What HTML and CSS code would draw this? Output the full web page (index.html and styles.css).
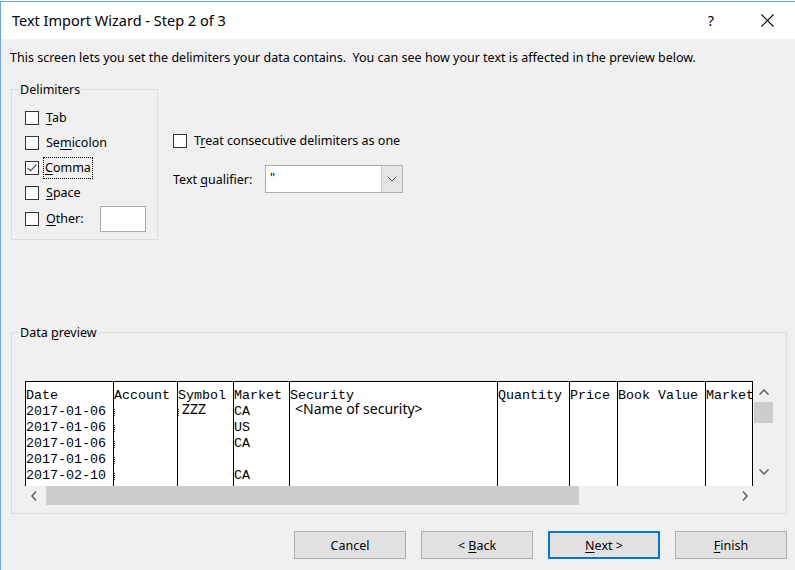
FILE: index.html
```html
<!DOCTYPE html>
<html>
<head>
<meta charset="utf-8">
<link rel="stylesheet" href="styles.css">
</head>
<body>
<div class="topstrip"></div>
<div class="window">
  <div class="titlebar">
    <div class="title">Text Import Wizard - Step 2 of 3</div>
    <div class="help">?</div>
    <div class="close"><svg width="13" height="13" viewBox="0 0 13 13"><path d="M0.5 0.5 L12.5 12.5 M12.5 0.5 L0.5 12.5" stroke="#000" stroke-width="1.1" fill="none"/></svg></div>
  </div>
  <div class="content">
    <p class="desc">This screen lets you set the delimiters your data contains.&nbsp; You can see how your text is affected in the preview below.</p>
    <div class="upper">
      <div class="group delims">
        <span class="glabel">Delimiters</span>
        <div class="cb-row"><span class="cb"></span><span class="cb-text"><u>T</u>ab</span></div>
        <div class="cb-row"><span class="cb"></span><span class="cb-text">Se<u>m</u>icolon</span></div>
        <div class="cb-row"><span class="cb"><svg width="12" height="12" viewBox="0 0 12 12"><path d="M1.5 6 L4.5 9 L10.5 2.5" stroke="#555" stroke-width="1.2" fill="none"/></svg></span><span class="cb-text focus"><u>C</u>omma</span></div>
        <div class="cb-row"><span class="cb"></span><span class="cb-text"><u>S</u>pace</span></div>
        <div class="cb-row other"><span class="cb"></span><span class="cb-text"><u>O</u>ther:</span><span class="textbox"></span></div>
      </div>
      <div class="options">
        <div class="cb-row treat"><span class="cb"></span><span class="cb-text">T<u>r</u>eat consecutive delimiters as one</span></div>
        <div class="qual-row">
          <span class="qual-label">Text <u>q</u>ualifier:</span>
          <div class="combo">
            <span class="combo-val">"</span>
            <span class="combo-btn"><svg width="10" height="6" viewBox="0 0 10 6"><path d="M0.5 0.5 L5 5 L9.5 0.5" stroke="#555" stroke-width="1" fill="none"/></svg></span>
          </div>
        </div>
      </div>
    </div>
    <div class="group preview">
      <span class="glabel">Data <u>p</u>review</span>
      <div class="pv">
        <div class="pv-main">
          <div class="grid">
            <div class="col w-date">
              <div>Date</div><div>2017-01-06</div><div>2017-01-06</div><div>2017-01-06</div><div>2017-01-06</div><div>2017-02-10</div>
            </div>
            <div class="col w-acct">
              <div>Account</div><div><span class="frag"></span></div><div><span class="frag"></span></div><div><span class="frag"></span></div><div><span class="frag"></span></div><div><span class="frag"></span></div>
            </div>
            <div class="col w-sym">
              <div>Symbol</div><div><span class="frag"></span><span class="prop zzz">ZZZ</span></div>
            </div>
            <div class="col w-mkt">
              <div>Market</div><div>CA</div><div>US</div><div>CA</div><div>&nbsp;</div><div>CA</div>
            </div>
            <div class="col w-sec">
              <div>Security</div><div><span class="prop secname">&lt;Name of security&gt;</span></div>
            </div>
            <div class="col w-qty"><div>Quantity</div></div>
            <div class="col w-price"><div>Price</div></div>
            <div class="col w-book"><div>Book Value</div></div>
            <div class="col w-mkt2"><div>Market</div></div>
          </div>
          <div class="hscroll">
            <span class="arrow"><svg width="6" height="10" viewBox="0 0 6 10"><path d="M5 0.5 L1 5 L5 9.5" stroke="#606060" stroke-width="1.5" fill="none"/></svg></span>
            <div class="htrack"><div class="hthumb"></div></div>
            <span class="arrow"><svg width="6" height="10" viewBox="0 0 6 10"><path d="M1 0.5 L5 5 L1 9.5" stroke="#606060" stroke-width="1.5" fill="none"/></svg></span>
          </div>
        </div>
        <div class="vscroll">
          <span class="varrow"><svg width="10" height="6" viewBox="0 0 10 6"><path d="M0.5 5.5 L5 1 L9.5 5.5" stroke="#606060" stroke-width="1.5" fill="none"/></svg></span>
          <div class="vthumb"></div>
          <div class="vtrack"></div>
          <span class="varrow"><svg width="10" height="6" viewBox="0 0 10 6"><path d="M0.5 0.5 L5 5 L9.5 0.5" stroke="#606060" stroke-width="1.5" fill="none"/></svg></span>
        </div>
      </div>
    </div>
    <div class="buttons">
      <div class="btn"><span>Cancel</span></div>
      <div class="btn"><span>&lt; <u>B</u>ack</span></div>
      <div class="btn default"><span><u>N</u>ext &gt;</span></div>
      <div class="btn"><span><u>F</u>inish</span></div>
    </div>
  </div>
</div>
</body>
</html>
```

FILE: styles.css
```css
* { box-sizing: border-box; }
html, body { margin: 0; padding: 0; }
body {
  width: 795px;
  height: 570px;
  overflow: hidden;
  background: #ffffff;
  font-family: "Noto Sans", "DejaVu Sans", sans-serif;
  font-size: 12.5px;
  color: #000;
}
u { text-decoration: underline; text-underline-offset: 2px; }
.topstrip { height: 1px; background: #fff; }
.window {
  border-top: 1px solid #6ea2da;
  border-left: 1px solid #6ea2da;
  height: 569px;
  background: #f0f0f0;
}
.titlebar {
  height: 37px;
  background: #fff;
  display: flex;
  align-items: center;
}
.title {
  margin-left: 11px;
  font-size: 14.5px;
  flex: 1;
  margin-top: -2px;
}
.help {
  font-size: 14.5px;
  width: 20px;
  margin-right: 40px;
  text-align: center;
  margin-top: -2px;
}
.close {
  width: 13px;
  height: 13px;
  margin-right: 21px;
  display: flex;
}
.content { padding-top: 11px; }
.desc {
  margin: 0 0 0 9px;
  line-height: 16px;
  height: 16px;
  white-space: nowrap;
}
.upper {
  display: flex;
  margin-top: 23px;
  margin-left: 10px;
}
.group {
  border: 1px solid #dcdcdc;
  position: relative;
}
.glabel {
  position: absolute;
  top: -8px;
  left: 7px;
  line-height: 16px;
  background: #f0f0f0;
  padding: 0 1px;
}
.delims {
  width: 147px;
  height: 151px;
  padding: 15px 0 0 13px;
}
.cb-row {
  display: flex;
  align-items: center;
  height: 25px;
}
.cb {
  width: 14px;
  height: 14px;
  border: 1px solid #333;
  background: #fff;
  flex: none;
  display: flex;
  align-items: center;
  justify-content: center;
}
.cb-text {
  margin-left: 7px;
  line-height: 16px;
  white-space: nowrap;
}
.focus {
  outline: 1px dotted #000;
  outline-offset: 0px;
  padding: 2px 1px;
  margin-left: 5px;
}
.other { height: 27px; }
.textbox {
  width: 46px;
  height: 26px;
  background: #fff;
  border: 1px solid #ababab;
  margin-left: 16px;
}
.options {
  margin-left: 15px;
}
.treat { margin-top: 39px; }
.qual-row {
  display: flex;
  align-items: center;
  margin-top: 12px;
  height: 28px;
}
.qual-label { width: 92px; white-space: nowrap; }
.combo {
  width: 138px;
  height: 28px;
  border: 1px solid #adadad;
  background: #fff;
  display: flex;
}
.combo-val {
  flex: 1;
  padding-left: 4px;
  line-height: 24px;
}
.combo-btn {
  width: 21px;
  background: #e5e5e5;
  border-left: 1px solid #cccccc;
  display: flex;
  align-items: center;
  justify-content: center;
}
.preview {
  margin-top: 92px;
  margin-left: 10px;
  width: 776px;
  height: 182px;
}
.pv {
  display: flex;
  margin-top: 48px;
  margin-left: 13px;
  width: 748px;
  height: 124px;
}
.pv-main { width: 728px; }
.grid {
  display: flex;
  height: 105px;
  background: #fff;
  border-top: 1px solid #000;
  border-left: 1px solid #000;
  overflow: hidden;
  font-family: "Liberation Mono", monospace;
  font-size: 13.33px;
}
.col {
  border-right: 1px solid #000;
  padding-top: 6px;
  white-space: nowrap;
  overflow: hidden;
  flex: none;
}
.col > div { height: 16px; line-height: 16px; }
.w-date { width: 88px; }
.w-acct { width: 64px; }
.w-sym { width: 56px; }
.w-mkt { width: 56px; }
.w-sec { width: 208px; }
.w-qty { width: 72px; }
.w-price { width: 48px; }
.w-book { width: 88px; }
.w-mkt2 { width: 47px; }
.frag {
  display: inline-block;
  width: 1px;
  height: 7px;
  margin-top: 5px;
  border-left: 1px dotted #333;
  vertical-align: top;
}
.prop {
  font-family: "Noto Sans", sans-serif;
  font-size: 14px;
  vertical-align: top;
  line-height: 13px;
  display: inline-block;
  margin-top: -2px;
}
.zzz { margin-left: 3px; }
.secname { margin-left: 5px; }
.hscroll {
  height: 19px;
  display: flex;
  align-items: center;
  background: #f0f0f0;
}
.arrow {
  width: 17px;
  display: flex;
  justify-content: center;
  flex: none;
}
.htrack { flex: 1; height: 19px; padding-left: 4px; }
.hthumb { width: 533px; height: 19px; background: #cdcdcd; }
.vscroll {
  width: 20px;
  display: flex;
  flex-direction: column;
  align-items: stretch;
  padding-top: 8px;
}
.varrow { display: flex; justify-content: center; height: 8px; padding-left: 1px; }
.vthumb { height: 21px; margin-top: 5px; background: #cdcdcd; margin-left: 1px; }
.vtrack { height: 46px; }
.buttons {
  display: flex;
  justify-content: flex-end;
  gap: 15px;
  margin-top: 17px;
  padding-right: 8px;
}
.btn {
  width: 112px;
  height: 28px;
  background: #e1e1e1;
  border: 1px solid #adadad;
  display: flex;
  align-items: center;
  justify-content: center;
  white-space: pre;
}
.btn.default { border: 2px solid #0078d7; }
```
